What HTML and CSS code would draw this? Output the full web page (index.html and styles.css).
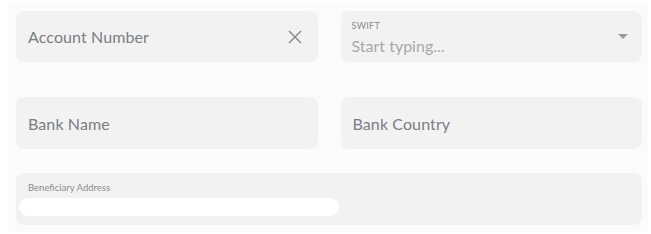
FILE: index.html
```html
<!DOCTYPE html>
<html lang="en">
<head>
    <meta charset="UTF-8">
    <title>Beneficiary bank details</title>
    <link rel="stylesheet" href="styles.css">
</head>
<body>
    <div class="form">
        <div class="row first">
            <div class="field">
                <span class="placeholder">Account Number</span>
                <svg class="clear" width="14" height="14" viewBox="0 0 14 14">
                    <path d="M1 1L13 13M13 1L1 13" stroke="#8c8c8c" stroke-width="1.5" fill="none"/>
                </svg>
            </div>
            <div class="field select">
                <div class="stack">
                    <span class="label">SWIFT</span>
                    <span class="hint">Start typing...</span>
                </div>
                <span class="caret"></span>
            </div>
        </div>
        <div class="row second">
            <div class="field">
                <span class="placeholder">Bank Name</span>
            </div>
            <div class="field">
                <span class="placeholder">Bank Country</span>
            </div>
        </div>
        <div class="field wide">
            <span class="label small">Beneficiary Address</span>
            <div class="address"></div>
        </div>
    </div>
</body>
</html>
```

FILE: styles.css
```css
body {
    margin: 0;
    background: #ffffff;
    font-family: Lato, "Open Sans", sans-serif;
}

.form {
    margin: 3px 3px 3px 8px;
    background-color: #fbfbfb;
    padding: 8px 6px 7px 8px;
}

.row {
    display: grid;
    grid-template-columns: 1fr 1fr;
    column-gap: 23px;
}

.row.first {
    margin-bottom: 35px;
}

.row.second {
    margin-bottom: 24px;
}

.field {
    background-color: #f2f2f2;
    border-radius: 8px;
    height: 51px;
    box-sizing: border-box;
    padding: 0 16px 0 12px;
    display: flex;
    align-items: center;
    justify-content: space-between;
}

.second .field {
    height: 52px;
}

.wide.field {
    height: 52px;
}

.placeholder {
    font-size: 16px;
    color: #7a7e84;
    letter-spacing: 0.1px;
}

.clear {
    display: block;
}

.select {
    padding-left: 11px;
}

.stack {
    display: flex;
    flex-direction: column;
    padding-top: 2px;
}

.label {
    font-size: 9px;
    color: #8a8a8a;
    letter-spacing: 0.3px;
    line-height: 12px;
}

.hint {
    font-size: 16px;
    color: #a8a8a8;
    line-height: 20px;
    margin-top: 4px;
}

.caret {
    width: 0;
    height: 0;
    border-left: 5px solid transparent;
    border-right: 5px solid transparent;
    border-top: 5px solid #9a9a9a;
    margin-right: -2px;
}

.wide {
    flex-direction: column;
    align-items: flex-start;
    justify-content: flex-start;
    padding: 9px 0 0 3px;
}

.label.small {
    font-size: 9.5px;
    padding-left: 9px;
    letter-spacing: 0;
    color: #8c8c8c;
}

.address {
    margin-top: 4px;
    width: 320px;
    height: 18px;
    background-color: #ffffff;
    border-radius: 9px;
}
```
